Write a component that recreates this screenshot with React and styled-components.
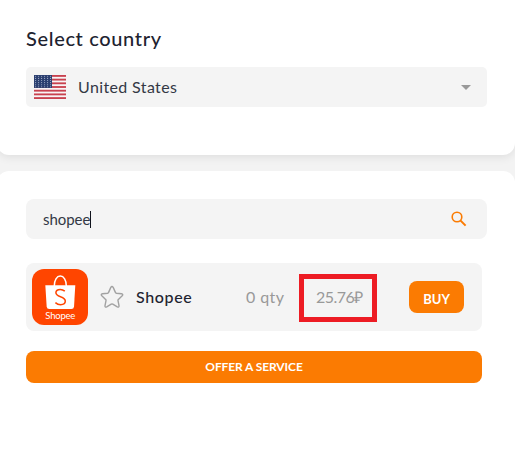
import { useState } from "react";
import styled, { createGlobalStyle } from "styled-components";

const stars = [];
for (let row = 0; row < 6; row++) {
    for (let col = 0; col < 6; col++) {
        stars.push({ x: 1.6 + col * 3, y: 1.3 + row * 2.1 });
    }
}

const UsaFlag = () => (
    <svg width="32" height="24" viewBox="0 0 32 24">
        <rect width="32" height="24" fill="#f8f4f5" />
        {[0, 2, 4, 6, 8, 10, 12].map((n) => (
            <rect key={n} y={(n * 24) / 13} width="32" height={24 / 13} fill="#c8414e" />
        ))}
        <rect width="18" height="12.92" fill="#2b3f70" />
        {stars.map((s, index) => (
            <circle key={index} cx={s.x} cy={s.y} r="0.55" fill="#a9b3cc" />
        ))}
    </svg>
)

const ShopeeLogo = () => (
    <svg width="56" height="56" viewBox="0 0 56 56">
        <rect width="56" height="56" rx="12" fill="#ff4500" />
        <path d="M22.3 17c0-6 2.5-9.9 6-9.9s6 3.9 6 9.9" fill="none" stroke="#fff" strokeWidth="1.5" />
        <path d="M13.3 16.3h30l-1.3 21.4q-.2 2.3-2.6 2.3H17.3q-2.4 0-2.6-2.3z" fill="#fff" />
        <path
            d="M32.8 22.1c-1.3-1.1-2.8-1.7-4.5-1.7-2.5 0-4.4 1.3-4.4 3.3 0 2.2 2 3 4.6 4 2.7 1 4.8 2 4.8 4.4 0 2.2-2 3.6-4.7 3.6-2 0-3.8-.8-5.2-2.1"
            fill="none"
            stroke="#ff4500"
            strokeWidth="1.5"
        />
        <text x="28.3" y="49.6" textAnchor="middle" textLength="30" fontFamily="Lato, sans-serif" fontSize="9.5" fill="#fff">Shopee</text>
    </svg>
)

const StarIcon = () => (
    <svg width="24" height="24" viewBox="0 0 24 24" fill="none" stroke="#a2a2a2" strokeWidth="1.4" strokeLinejoin="round">
        <path d="M10.7 2.6q1.3-2.2 2.6 0l2.1 4.8q.3.7 1 .8l5.1.6q2.1.4.7 2l-3.8 3.6q-.6.5-.4 1.3l1 4.9q.2 2.1-1.7 1.2l-4.5-2.6q-.8-.4-1.6 0l-4.5 2.6q-1.9.9-1.7-1.2l1-4.9q.2-.8-.4-1.3l-3.8-3.6q-1.4-1.6.7-2l5.1-.6q.7-.1 1-.8z" />
    </svg>
)

const SearchIcon = () => (
    <svg width="16" height="16" viewBox="0 0 16 16" fill="none" stroke="#fb7b02">
        <circle cx="6" cy="6" r="4.8" strokeWidth="1.6" />
        <path d="M9.6 9.6l5 5" strokeWidth="2" />
    </svg>
)

const App = () => {
    const [search, setSearch] = useState("shopee")

    return (
        <Page>
            <GlobalStyle />
            <CountryCard>
                <Title>Select country</Title>
                <Select>
                    <UsaFlag />
                    <Country>United States</Country>
                    <Arrow />
                </Select>
            </CountryCard>
            <ServiceCard>
                <SearchBox>
                    <SearchInput value={search} onChange={(event) => setSearch(event.target.value)} />
                    <Caret />
                    <SearchIcon />
                </SearchBox>
                <Service>
                    <ShopeeLogo />
                    <Favorite><StarIcon /></Favorite>
                    <Name>Shopee</Name>
                    <Quantity>0 qty</Quantity>
                    <PriceFrame>
                        <Price>25.76₽</Price>
                    </PriceFrame>
                    <BuyButton>BUY</BuyButton>
                </Service>
                <OfferButton>OFFER A SERVICE</OfferButton>
            </ServiceCard>
        </Page>
    )
}

const GlobalStyle = createGlobalStyle`
    * {
        box-sizing: border-box;
    }
    body {
        margin: 0;
        overflow: hidden;
        background: #f3f3f3;
        color: #1e2330;
        font-family: Lato, "Open Sans", sans-serif;
    }
    svg {
        display: block;
        flex-shrink: 0;
    }
`

const Page = styled.main`
    display: flex;
    flex-direction: column;
    gap: 16px;
    height: 454px;
    margin-left: -3px;
`

const Card = styled.section`
    display: flex;
    flex-direction: column;
    padding: 28px 28px 0 29px;
    background: #fff;
    border-radius: 12px;
    box-shadow: 0 2px 10px rgba(0, 0, 0, 0.09);
`

const CountryCard = styled(Card)`
    height: 155px;
    border-top-left-radius: 0;
    border-top-right-radius: 0;
`

const ServiceCard = styled(Card)`
    flex: 1;
    border-bottom-left-radius: 0;
    border-bottom-right-radius: 0;
    box-shadow: none;
`

const Title = styled.h1`
    margin: -2px 0 17px;
    font-size: 20px;
    font-weight: 500;
    line-height: 24px;
    letter-spacing: 0.65px;
`

const Field = styled.div`
    display: flex;
    align-items: center;
    height: 40px;
    background: #f4f4f4;
`

const Select = styled(Field)`
    padding: 0 16px 0 8px;
    border-radius: 5px;
`

const Country = styled.span`
    flex: 1;
    margin: -2px 0 0 12px;
    font-size: 16px;
    letter-spacing: 0.37px;
    color: #333845;
`

const Arrow = styled.i`
    border: 5px solid transparent;
    border-top-color: #999;
    border-bottom: 0;
`

const SearchBox = styled(Field)`
    padding: 0 20px 0 17px;
    border-radius: 8px;
`

const SearchInput = styled.input`
    width: 47px;
    padding: 0;
    border: 0;
    outline: 0;
    background: transparent;
    color: #333845;
    font: 15px Lato, sans-serif;
    letter-spacing: -0.05px;
`

const Caret = styled.i`
    width: 1px;
    height: 17px;
    margin-right: auto;
    background: #10131c;
`

const Service = styled.div`
    display: flex;
    align-items: center;
    width: 456px;
    height: 68px;
    margin-top: 24px;
    padding: 0 18px 0 6px;
    background: #f4f4f4;
    border-radius: 8px;
`

const Favorite = styled.span`
    margin-left: 12px;
`

const Name = styled.span`
    width: 110px;
    margin: -2px 0 0 12px;
    font-size: 16px;
    font-weight: 500;
    letter-spacing: 0.65px;
`

const Quantity = styled.span`
    width: 53px;
    margin-top: -2px;
    color: #999;
    font-size: 16px;
    letter-spacing: 0.4px;
`

const PriceFrame = styled.div`
    display: flex;
    align-items: center;
    width: 78px;
    height: 48px;
    padding: 0 0 2px 12px;
    margin-top: 1px;
    border: 5px solid #ed1c24;
`

const Price = styled.span`
    color: #999;
    font-size: 16px;
    letter-spacing: -0.5px;
    white-space: nowrap;
`

const Button = styled.button`
    height: 32px;
    border: 0;
    border-radius: 8px;
    background: #fb7b02;
    color: #fff;
    font-family: Lato, sans-serif;
    font-weight: 700;
`

const BuyButton = styled(Button)`
    width: 55px;
    margin-left: auto;
    padding: 4px 0 0;
    font-size: 13px;
`

const OfferButton = styled(Button)`
    width: 456px;
    margin-top: 20px;
    padding: 0 0 1px;
    font-size: 12px;
    letter-spacing: -0.1px;
`

export default App
